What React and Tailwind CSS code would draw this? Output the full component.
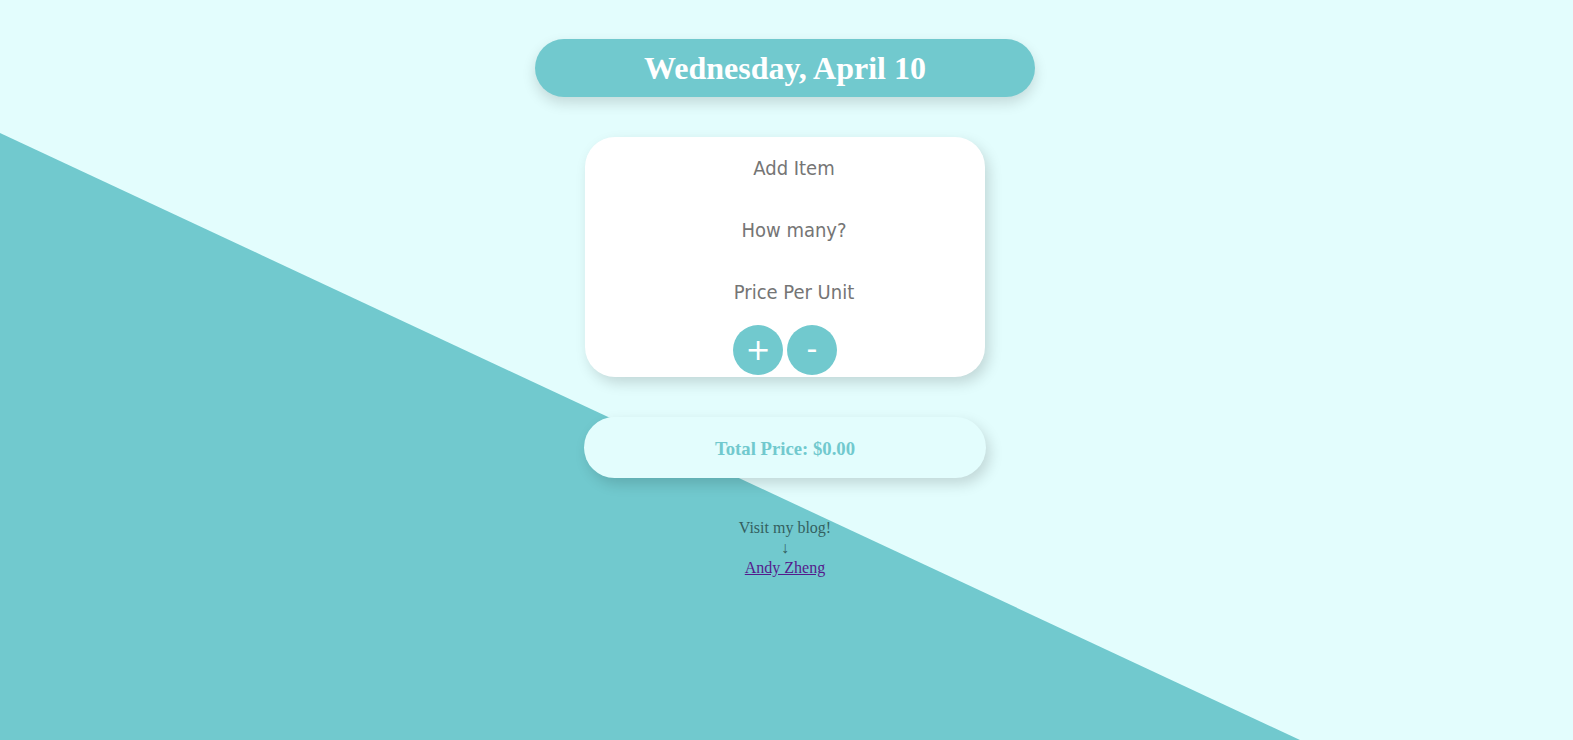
import { useState } from 'react'

const TEAL = '#71c9ce'

function Background() {
  return (
    <svg className="absolute inset-0 h-full w-full" viewBox="0 0 1573 740" preserveAspectRatio="none">
      <rect x="0" y="0" width="1573" height="740" fill="#e3fdfd" />
      <polygon points="0,133 1300,740 0,740" fill={TEAL} />
    </svg>
  )
}

export default function App() {
  const [item, setItem] = useState('')
  const [qty, setQty] = useState('')
  const [price, setPrice] = useState('')
  const [total, setTotal] = useState(0)

  const inputClass =
    'h-[28px] w-full bg-transparent text-center text-[20px] text-[#333] outline-none placeholder:text-[#757575] [font-family:"DejaVu_Sans_Condensed","DejaVu_Sans",sans-serif] [font-stretch:condensed]'

  const add = () => setTotal(t => t + (parseFloat(qty) || 0) * (parseFloat(price) || 0))
  const remove = () => setTotal(t => Math.max(0, t - (parseFloat(qty) || 0) * (parseFloat(price) || 0)))

  return (
    <div className="relative h-[740px] w-full overflow-hidden">
      <Background />

      <div className="relative flex flex-col items-center pr-[3px] pt-[39px]">
        {/* Date pill */}
        <div className="flex h-[58px] w-[500px] items-center justify-center rounded-full bg-[#71c9ce] shadow-[0_6px_14px_rgba(0,0,0,0.14)]">
          <h1 className="pb-[1px] text-[32px] font-bold text-white [font-family:'Liberation_Serif',serif]">
            Wednesday, April 10
          </h1>
        </div>

        {/* Entry card */}
        <div className="mt-[40px] flex h-[240px] w-[400px] flex-col items-center rounded-[30px] bg-white pt-[17px] shadow-[4px_6px_14px_rgba(0,0,0,0.15)]">
          <div className="flex w-full flex-col gap-[34px] pl-[50px] pr-[32px]">
            <input className={inputClass} placeholder="Add Item" value={item} onChange={e => setItem(e.target.value)} />
            <input className={inputClass} placeholder="How many?" value={qty} onChange={e => setQty(e.target.value)} />
            <input className={inputClass} placeholder="Price Per Unit" value={price} onChange={e => setPrice(e.target.value)} />
          </div>
          <div className="mt-[19px] flex gap-[4px]">
            <button
              type="button"
              onClick={add}
              className="flex h-[50px] w-[50px] items-center justify-center rounded-full bg-[#71c9ce] pb-[2px] text-[30px] text-white [font-family:'DejaVu_Sans',sans-serif]"
            >
              +
            </button>
            <button
              type="button"
              onClick={remove}
              className="flex h-[50px] w-[50px] items-center justify-center rounded-full bg-[#71c9ce] pb-[4px] text-[30px] text-white [font-family:'DejaVu_Sans',sans-serif]"
            >
              -
            </button>
          </div>
        </div>

        {/* Total */}
        <div className="mt-[40px] flex h-[61px] w-[402px] items-center justify-center rounded-full bg-[#e3fdfd] pt-[3px] shadow-[4px_6px_14px_rgba(0,0,0,0.15)]">
          <h3 className="text-[18.72px] font-bold text-[#71c9ce] [font-family:'Liberation_Serif',serif]">
            Total Price: ${total.toFixed(2)}
          </h3>
        </div>

        {/* Footer */}
        <div className="mt-[40px] flex flex-col items-center text-[16px] leading-[20px] text-[#34605f] [font-family:'Liberation_Serif',serif]">
          <p>Visit my blog!</p>
          <p className="text-[16px]">↓</p>
          <a href="#" className="text-[#551a8b] underline">
            Andy Zheng
          </a>
        </div>
      </div>
    </div>
  )
}
